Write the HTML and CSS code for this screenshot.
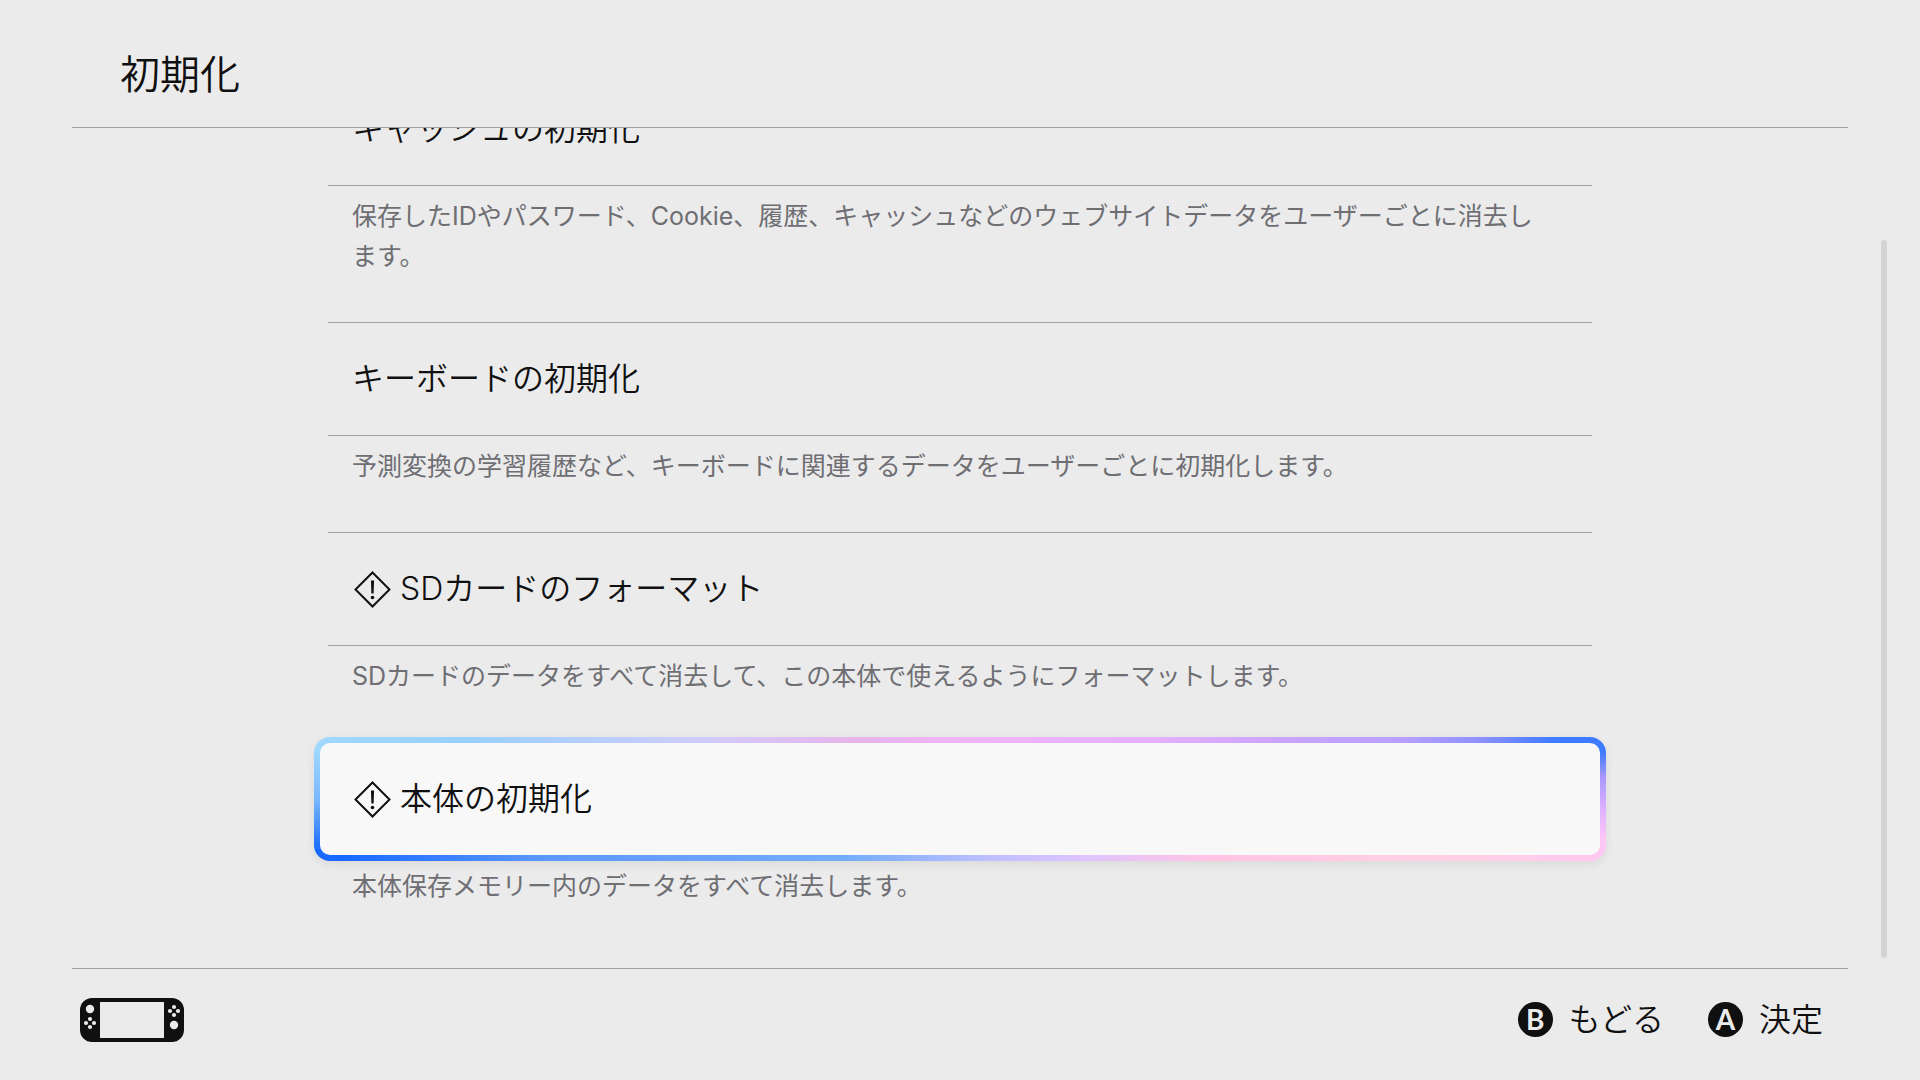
FILE: index.html
```html
<!DOCTYPE html>
<html lang="ja">
<head>
    <meta charset="UTF-8">
    <meta name="viewport" content="width=device-width, initial-scale=1.0">
    <title>初期化</title>
    <link rel="stylesheet" href="styles.css">
</head>
<body>
    <header class="header">
        <h1>初期化</h1>
    </header>

    <main class="content">
        <ul class="list">
            <li>
                <button type="button" class="item" aria-describedby="desc-cache">キャッシュの初期化</button>
                <p class="desc" id="desc-cache">保存したIDやパスワード、Cookie、履歴、キャッシュなどのウェブサイトデータをユーザーごとに消去します。</p>
            </li>
            <li>
                <button type="button" class="item" aria-describedby="desc-keyboard">キーボードの初期化</button>
                <p class="desc" id="desc-keyboard">予測変換の学習履歴など、キーボードに関連するデータをユーザーごとに初期化します。</p>
            </li>
            <li>
                <button type="button" class="item" aria-describedby="desc-sd">
                    <svg class="warn" viewBox="0 0 40 40" aria-hidden="true">
                        <path d="M20.5 3.500L37.500 20.500L20.500 37.500L3.500 20.500Z" fill="none" stroke="currentColor" stroke-width="2"/>
                        <path d="M18.900 11.500h3.200l-.5 13h-2.200z" fill="currentColor"/>
                        <circle cx="20.500" cy="28.500" r="1.800" fill="currentColor"/>
                    </svg>
                    <span>SDカードのフォーマット</span>
                </button>
                <p class="desc" id="desc-sd">SDカードのデータをすべて消去して、この本体で使えるようにフォーマットします。</p>
            </li>
            <li>
                <button type="button" class="item selected" aria-describedby="desc-console">
                    <svg class="warn" viewBox="0 0 40 40" aria-hidden="true">
                        <path d="M20.5 3.500L37.500 20.500L20.500 37.500L3.500 20.500Z" fill="none" stroke="currentColor" stroke-width="2"/>
                        <path d="M18.900 11.500h3.200l-.5 13h-2.200z" fill="currentColor"/>
                        <circle cx="20.500" cy="28.500" r="1.800" fill="currentColor"/>
                    </svg>
                    <span>本体の初期化</span>
                </button>
                <p class="desc" id="desc-console">本体保存メモリー内のデータをすべて消去します。</p>
            </li>
        </ul>
        <div class="scrollbar"></div>
    </main>

    <footer class="footer">
        <svg class="console" viewBox="0 0 104 44" role="img" aria-label="本体">
            <rect width="104" height="44" rx="12" fill="#101010"/>
            <g fill="#ebebeb">
                <rect x="20" y="4" width="64" height="36"/>
                <circle cx="10" cy="11" r="4.200"/>
                <circle cx="10" cy="21" r="2.100"/>
                <circle cx="6" cy="25" r="2.100"/>
                <circle cx="14" cy="25" r="2.100"/>
                <circle cx="10" cy="29" r="2.100"/>
                <circle cx="94" cy="9" r="2.100"/>
                <circle cx="90" cy="13" r="2.100"/>
                <circle cx="98" cy="13" r="2.100"/>
                <circle cx="94" cy="17" r="2.100"/>
                <circle cx="94" cy="27" r="4.200"/>
            </g>
        </svg>
        <div class="actions">
            <button type="button" class="action"><span class="key">B</span><span>もどる</span></button>
            <button type="button" class="action"><span class="key">A</span><span>決定</span></button>
        </div>
    </footer>
</body>
</html>
```
FILE: styles.css
```css
* {
    box-sizing: border-box;
    margin: 0;
    padding: 0;
}

body {
    display: flex;
    flex-direction: column;
    height: 100vh;
    overflow: hidden;
    background: #ebebeb;
    color: #101010;
    font-family: Inter, "Noto Sans CJK JP", sans-serif;
    font-weight: 350;
}

button {
    border: 0;
    background: none;
    color: inherit;
    font: inherit;
    cursor: pointer;
}

/* ヘッダー */
.header {
    flex: none;
    margin: 0 72px;
    padding: 45px 48px 22px;
    border-bottom: 1px solid #a0a0a0;
}

.header h1 {
    font-size: 40px;
    font-weight: 350;
    line-height: 60px;
}

/* 一番下までスクロールした状態 */
.content {
    position: relative;
    flex: 1;
    min-height: 0;
    display: flex;
    flex-direction: column;
    justify-content: flex-end;
    padding: 0 328px 16px;
    overflow: hidden;
}

.list {
    list-style: none;
}

.item {
    display: flex;
    align-items: center;
    gap: 8px;
    width: 100%;
    height: 114px;
    padding: 0 24px;
    border-top: 1px solid #a0a0a0;
    border-bottom: 1px solid #a0a0a0;
    font-size: 32px;
    line-height: 48px;
    text-align: left;
}

.desc {
    padding: 10px 48px 46px 24px;
    color: #6e6e73;
    font-size: 25px;
    font-weight: 400;
    line-height: 40px;
}

.warn {
    flex: none;
    width: 40px;
    height: 40px;
}

/* 選択中の枠 */
.item.selected {
    width: calc(100% + 28px);
    height: 124px;
    margin: -5px -14px;
    padding: 0 32px;
    border: 6px solid transparent;
    border-radius: 16px;
    background:
        linear-gradient(#f8f8f8, #f8f8f8) padding-box,
        linear-gradient(#9fd8ff 10%, #7ab8ff 50%, #1769ff 92%) left / 6px 100% no-repeat border-box,
        linear-gradient(#3e7bff 12%, #a797ff 32%, #e2b3ff 60%, #ffc8f4 85%) right / 6px 100% no-repeat border-box,
        linear-gradient(90deg, #9fd8ff, #99d1ff 12%, #d0ccff 30%, #e8b4ea 42%, #efb5fb 52%, #e6b0ff 65%, #cda5ff 74%, #b8a0ff 84%, #9191ff 90%, #3e7bff 96%) top / 100% 50% no-repeat border-box,
        linear-gradient(90deg, #1769ff 2%, #5c98ff 18%, #72adff 41%, #bdbfff 52%, #dcc4ff 59%, #ffc3e5 69%, #ffd1e4 87%, #ffc8f0) bottom / 100% 50% no-repeat border-box;
    box-shadow: 0 3px 10px rgba(0, 0, 0, 0.08);
}

.scrollbar {
    position: absolute;
    top: 112px;
    right: 33px;
    bottom: 10px;
    width: 6px;
    border-radius: 3px;
    background: #d3d3d5;
}

/* フッター */
.footer {
    flex: none;
    display: flex;
    align-items: center;
    justify-content: space-between;
    height: 112px;
    margin: 0 72px;
    padding: 0 25px 10px 8px;
    border-top: 1px solid #a0a0a0;
}

.console {
    width: 104px;
    height: 44px;
}

.actions {
    display: flex;
    gap: 44px;
}

.action {
    display: flex;
    align-items: center;
    gap: 16px;
    font-size: 32px;
    line-height: 48px;
}

.key {
    width: 35px;
    height: 35px;
    border-radius: 50%;
    background: #101010;
    color: #ebebeb;
    font-family: Lato, sans-serif;
    font-size: 28px;
    font-weight: 700;
    line-height: 35px;
    text-align: center;
}
```
